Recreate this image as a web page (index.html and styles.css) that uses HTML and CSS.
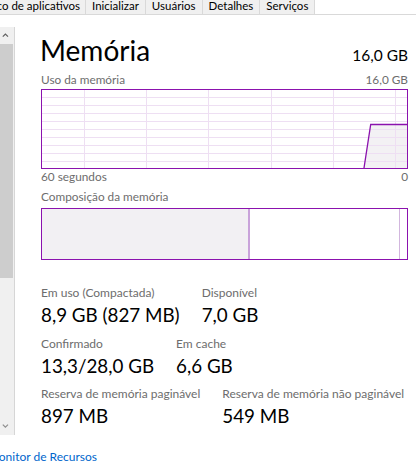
FILE: index.html
```html
<!DOCTYPE html>
<html lang="pt-BR">
<head>
    <meta charset="UTF-8">
    <meta name="viewport" content="width=device-width, initial-scale=1.0">
    <title>Gerenciador de Tarefas - Memória</title>
    <link rel="stylesheet" href="styles.css">
</head>
<body>
    <nav class="tabs">
        <div class="tab tab-clipped"><span>Histórico de aplicativos</span></div>
        <div class="tab">Inicializar</div>
        <div class="tab">Usuários</div>
        <div class="tab">Detalhes</div>
        <div class="tab">Serviços</div>
    </nav>

    <div class="main">
        <aside class="sidebar">
            <div class="scrollbar">
                <div class="scroll-btn">
                    <svg width="14" height="17" viewBox="0 0 14 17"><path d="M2.8 9.6 L5.4 7 L8 9.6" fill="none" stroke="#606060" stroke-width="1.2"/></svg>
                </div>
                <div class="scroll-track"><div class="scroll-thumb"></div></div>
                <div class="scroll-btn">
                    <svg width="14" height="17" viewBox="0 0 14 17"><path d="M2.8 6.6 L5.4 9.2 L8 6.6" fill="none" stroke="#8e8e8e" stroke-width="1.2"/></svg>
                </div>
            </div>
        </aside>

        <section class="panel">
            <header class="panel-head">
                <h1>Memória</h1>
                <span class="total">16,0 GB</span>
            </header>

            <div class="chart-label chart-label-top">
                <span>Uso da memória</span>
                <span>16,0 GB</span>
            </div>
            <div class="usage-chart">
                <svg width="365" height="78" viewBox="0 0 365 78">
                    <polygon points="322,78 328.7,34 365,34 365,78" fill="#f3f1f4"/>
                    <g stroke="#eedff3" stroke-width="1">
                        <line x1="42.5" y1="0" x2="42.5" y2="78"/>
                        <line x1="104.5" y1="0" x2="104.5" y2="78"/>
                        <line x1="166.5" y1="0" x2="166.5" y2="78"/>
                        <line x1="229.5" y1="0" x2="229.5" y2="78"/>
                        <line x1="291.5" y1="0" x2="291.5" y2="78"/>
                        <line x1="353.5" y1="0" x2="353.5" y2="78"/>
                        <line x1="0" y1="7.5" x2="365" y2="7.5"/>
                        <line x1="0" y1="15.5" x2="365" y2="15.5"/>
                        <line x1="0" y1="23.5" x2="365" y2="23.5"/>
                        <line x1="0" y1="31.5" x2="365" y2="31.5"/>
                        <line x1="0" y1="39.5" x2="365" y2="39.5"/>
                        <line x1="0" y1="47.5" x2="365" y2="47.5"/>
                        <line x1="0" y1="55.5" x2="365" y2="55.5"/>
                        <line x1="0" y1="63.5" x2="365" y2="63.5"/>
                        <line x1="0" y1="71.5" x2="365" y2="71.5"/>
                    </g>
                    <polyline points="322,78 328.7,34.5 365,34.5" fill="none" stroke="#8b12ae" stroke-width="1.3"/>
                </svg>
            </div>
            <div class="chart-label chart-label-axis">
                <span>60 segundos</span>
                <span>0</span>
            </div>

            <div class="chart-label chart-label-comp">
                <span>Composição da memória</span>
            </div>
            <div class="composition">
                <div class="segment in-use" style="width: 57%"></div>
                <div class="segment standby" style="width: 41.1%"></div>
                <div class="segment free"></div>
            </div>

            <div class="stats">
                <div class="stat-row">
                    <div class="stat">
                        <div class="stat-label">Em uso (Compactada)</div>
                        <div class="stat-value">8,9 GB (827 MB)</div>
                    </div>
                    <div class="stat">
                        <div class="stat-label">Disponível</div>
                        <div class="stat-value">7,0 GB</div>
                    </div>
                </div>
                <div class="stat-row">
                    <div class="stat">
                        <div class="stat-label">Confirmado</div>
                        <div class="stat-value">13,3/28,0 GB</div>
                    </div>
                    <div class="stat">
                        <div class="stat-label">Em cache</div>
                        <div class="stat-value">6,6 GB</div>
                    </div>
                </div>
                <div class="stat-row">
                    <div class="stat">
                        <div class="stat-label">Reserva de memória paginável</div>
                        <div class="stat-value">897 MB</div>
                    </div>
                    <div class="stat">
                        <div class="stat-label">Reserva de memória não paginável</div>
                        <div class="stat-value">549 MB</div>
                    </div>
                </div>
            </div>
        </section>
    </div>

    <footer class="footer">
        <a class="monitor-link" href="#">Abrir o Monitor de Recursos</a>
    </footer>
</body>
</html>
```

FILE: styles.css
```css
body {
    margin: 0;
    width: 416px;
    height: 463px;
    overflow: hidden;
    font-family: Lato, "Open Sans", sans-serif;
    color: #000;
    background: #fff;
}
.tabs {
    display: flex;
    height: 15px;
    box-sizing: border-box;
    border-bottom: 1px solid #d9d9d9;
    font-size: 11.5px;
    line-height: 12px;
}
.tab {
    padding: 0 6px;
    background: #f0f0f0;
    border-right: 1px solid #d9d9d9;
    white-space: nowrap;
}
.tab-clipped {
    width: 86px;
    box-sizing: border-box;
    display: flex;
    justify-content: flex-end;
    overflow: hidden;
    padding: 0 5px 0 0;
}
.main {
    display: flex;
    height: 420px;
}
.sidebar {
    width: 15px;
    padding-top: 12px;
}
.scrollbar {
    width: 14px;
    height: 408px;
    display: flex;
    flex-direction: column;
    background: #f0f0f0;
    border-right: 1px solid #d6d6d6;
}
.scroll-btn {
    height: 17px;
}
.scroll-btn svg {
    display: block;
}
.scroll-track {
    flex: 1;
}
.scroll-thumb {
    width: 13px;
    height: 234px;
    background: #cdcdcd;
}
.panel {
    flex: 1;
    padding: 18px 8px 0 26px;
}
.panel-head {
    display: flex;
    justify-content: space-between;
    align-items: baseline;
}
h1 {
    margin: 0 0 0 -1px;
    font-size: 28px;
    font-weight: 400;
    line-height: 34px;
}
.total {
    font-size: 15.5px;
}
.chart-label {
    display: flex;
    justify-content: space-between;
    font-size: 11.8px;
    line-height: 14px;
    color: #6d6d6d;
}
.chart-label-top {
    margin-top: 6px;
}
.chart-label-axis {
    margin-top: 1px;
}
.chart-label-comp {
    margin-top: 6px;
}
.usage-chart {
    margin-top: 2px;
    height: 78px;
    border: 1px solid #8b12ae;
}
.usage-chart svg {
    display: block;
}
.composition {
    display: flex;
    margin-top: 4px;
    height: 50px;
    border: 1px solid #8b12ae;
}
.segment {
    box-sizing: border-box;
}
.in-use {
    background: #f2f0f3;
    border-right: 2px solid #c9a3da;
}
.standby {
    border-right: 1px solid #d2b6de;
}
.free {
    flex: 1;
}
.stats {
    margin-top: 26px;
}
.stat-row {
    display: flex;
    gap: 22px;
    margin-bottom: 10.5px;
}
.stat-label {
    font-size: 12px;
    line-height: 14px;
    color: #6d6d6d;
    white-space: nowrap;
}
.stat-value {
    margin-top: 4px;
    font-size: 18.8px;
    line-height: 22px;
    white-space: nowrap;
}
.footer {
    width: 97px;
    margin-top: 15px;
    display: flex;
    justify-content: flex-end;
    overflow: hidden;
    white-space: nowrap;
    font-size: 12px;
    line-height: 14px;
}
.monitor-link {
    color: #0066cc;
    text-decoration: none;
}
```
